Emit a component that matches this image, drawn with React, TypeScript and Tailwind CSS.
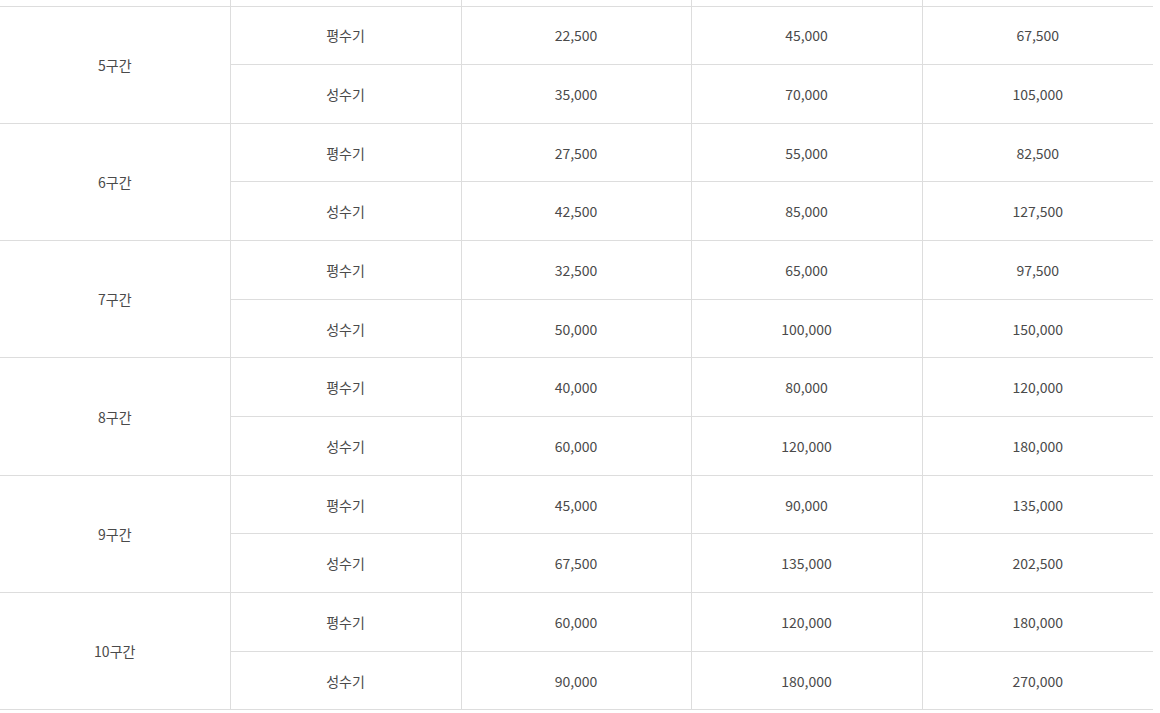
import React from "react";

const data: [string, string[], string[]][] = [
  ["5구간", ["22,500", "45,000", "67,500"], ["35,000", "70,000", "105,000"]],
  ["6구간", ["27,500", "55,000", "82,500"], ["42,500", "85,000", "127,500"]],
  ["7구간", ["32,500", "65,000", "97,500"], ["50,000", "100,000", "150,000"]],
  ["8구간", ["40,000", "80,000", "120,000"], ["60,000", "120,000", "180,000"]],
  ["9구간", ["45,000", "90,000", "135,000"], ["67,500", "135,000", "202,500"]],
  ["10구간", ["60,000", "120,000", "180,000"], ["90,000", "180,000", "270,000"]],
];

const cell = "border border-[#dddddd] text-center align-middle h-[58.66px] p-0 pt-[1px]";

export default function App() {
  return (
    <div className="w-[1160px] h-[713px] overflow-hidden bg-white" style={{ fontFamily: '"Noto Sans CJK KR", "Noto Sans", sans-serif' }}>
      <table className="w-[1153px] table-fixed border-collapse text-[14px] text-[#4a4a4a]">
        <colgroup>
          <col className="w-[230px]" />
          <col className="w-[231px]" />
          <col className="w-[230px]" />
          <col className="w-[231px]" />
          <col className="w-[231px]" />
        </colgroup>
        <tbody>
          <tr>
            <td className="border-x border-b border-[#dddddd] border-l-0 h-[6px] p-0"></td>
            <td className="border-x border-b border-[#dddddd] h-[6px] p-0"></td>
            <td className="border-x border-b border-[#dddddd] h-[6px] p-0"></td>
            <td className="border-x border-b border-[#dddddd] h-[6px] p-0"></td>
            <td className="border-x border-b border-[#dddddd] border-r-0 h-[6px] p-0"></td>
          </tr>
          {data.map(([name, a, b]) => (
            <React.Fragment key={name}>
              <tr>
                <td rowSpan={2} className={`${cell} border-l-0`}>{name}</td>
                <td className={cell}>평수기</td>
                <td className={cell}>{a[0]}</td>
                <td className={cell}>{a[1]}</td>
                <td className={`${cell} border-r-0`}>{a[2]}</td>
              </tr>
              <tr>
                <td className={cell}>성수기</td>
                <td className={cell}>{b[0]}</td>
                <td className={cell}>{b[1]}</td>
                <td className={`${cell} border-r-0`}>{b[2]}</td>
              </tr>
            </React.Fragment>
          ))}
        </tbody>
      </table>
    </div>
  );
}
